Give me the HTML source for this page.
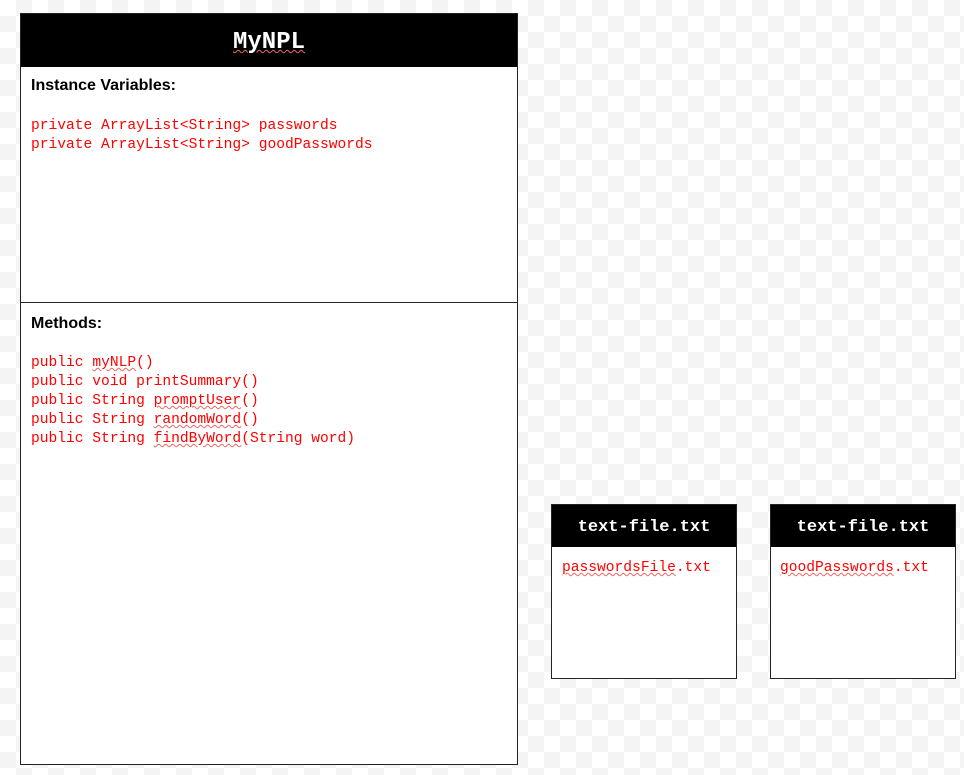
<html><head><style>
body{margin:0;width:964px;height:775px;background-color:#fff;background-image:conic-gradient(#f4f4f4 25%,#fff 0 50%,#f4f4f4 0 75%,#fff 0);background-size:32px 32px;position:relative;overflow:hidden;font-family:"Liberation Sans",sans-serif}
.box{position:absolute;background:#fff;border:1px solid #222;box-sizing:border-box}
.hd{background:#000;color:#fff;font-family:"Liberation Mono",monospace;font-weight:bold;text-align:center}
.code{font-family:"Liberation Mono",monospace;font-size:14.6px;color:#f00;line-height:19px;white-space:pre}
.lbl{font-weight:bold;font-size:16px;color:#000}
.u{text-decoration:underline wavy #e66;text-decoration-thickness:1px}
</style></head><body>
<div class="box" style="left:20px;top:13px;width:498px;height:752px">
<div class="hd" style="height:53px;line-height:58px;font-size:24px"><span class="u">MyNPL</span></div>
<div style="position:absolute;left:10px;top:63px" class="lbl">Instance Variables:</div>
<div class="code" style="position:absolute;left:10px;top:103px">private ArrayList&lt;String&gt; passwords
private ArrayList&lt;String&gt; goodPasswords</div>
<div style="position:absolute;left:0;right:0;top:288px;border-top:1px solid #222"></div>
<div style="position:absolute;left:10px;top:301px" class="lbl">Methods:</div>
<div class="code" style="position:absolute;left:10px;top:340px">public <span class="u">myNLP</span>()
public void printSummary()
public String <span class="u">promptUser</span>()
public String <span class="u">randomWord</span>()
public String <span class="u">findByWord</span>(String word)</div>
</div>
<div class="box" style="left:551px;top:504px;width:186px;height:175px">
<div class="hd" style="height:42px;line-height:45px;font-size:17px">text-file.txt</div>
<div class="code" style="position:absolute;left:10px;top:54px"><span class="u">passwordsFile</span>.txt</div>
</div>
<div class="box" style="left:770px;top:504px;width:186px;height:175px">
<div class="hd" style="height:42px;line-height:45px;font-size:17px">text-file.txt</div>
<div class="code" style="position:absolute;left:9px;top:54px"><span class="u">goodPasswords</span>.txt</div>
</div>
</body></html>
